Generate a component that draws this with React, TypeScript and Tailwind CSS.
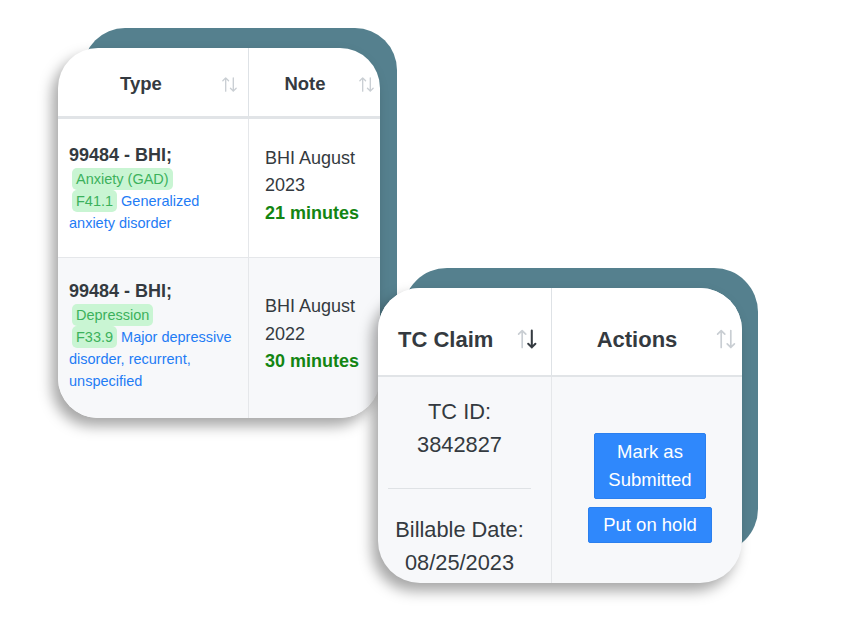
import React from 'react';

const font = { fontFamily: '"Liberation Sans", Arial, sans-serif' };

const SortIcon: React.FC<{ active?: boolean; size?: number }> = ({ active, size = 20 }) => (
  <svg width={size} height={size} viewBox="0 0 20 20" fill="none" strokeLinecap="round" strokeLinejoin="round">
    <g stroke="#c9ced3" strokeWidth="1.4">
      <path d="M6 17V3M3 6l3-3 3 3" />
    </g>
    <g stroke={active ? '#343a40' : '#c9ced3'} strokeWidth={active ? 1.7 : 1.4}>
      <path d="M14 3v14M11 14l3 3 3-3" />
    </g>
  </svg>
);

const Badge: React.FC<{ children: React.ReactNode }> = ({ children }) => (
  <span className="inline-block rounded-[5px] bg-[#c9f5d3] px-[4px] leading-[22px] text-[#3cb15c]">{children}</span>
);

interface Row {
  problem: string;
  code: string;
  desc: string;
  year: string;
  minutes: string;
  striped?: boolean;
}

const rows: Row[] = [
  { problem: 'Anxiety (GAD)', code: 'F41.1', desc: 'Generalized anxiety disorder', year: '2023', minutes: '21 minutes' },
  { problem: 'Depression', code: 'F33.9', desc: 'Major depressive disorder, recurrent, unspecified', year: '2022', minutes: '30 minutes', striped: true },
];

export default function App() {
  return (
    <div className="relative h-[624px] w-[847px] overflow-hidden bg-white" style={font}>
      {/* card one */}
      <div className="absolute left-[83px] top-[28px] h-[362px] w-[314px] rounded-[42px] bg-[#55808e]" />
      <div className="absolute left-[58px] top-[48px] h-[370px] w-[322px] overflow-hidden rounded-[40px] bg-white shadow-[-6px_8px_14px_rgba(0,0,0,0.35)]">
        <div className="grid grid-cols-[191px_131px]">
          <div className="flex h-[68px] items-center border-r border-[#dee2e6] pt-[4px]">
            <span className="flex-1 pl-[4px] text-center text-[18.5px] font-bold text-[#343a40]">Type</span>
            <span className="pr-[9px]"><SortIcon size={19} /></span>
          </div>
          <div className="flex h-[68px] items-center pt-[4px]">
            <span className="flex-1 pl-[4px] text-center text-[18.5px] font-bold text-[#343a40]">Note</span>
            <span className="pr-[4px]"><SortIcon size={19} /></span>
          </div>
        </div>
        <div className="h-[3px] bg-[#e1e4e7]" />
        {rows.map((r, i) => (
          <div
            key={r.code}
            className={`grid grid-cols-[191px_131px] ${r.striped ? 'bg-[#f7f8fa]' : 'bg-white'} ${i === 0 ? 'h-[139px] border-b border-[#e5e7ea]' : 'h-[161px]'}`}
          >
            <div className={`flex flex-col justify-center border-r border-[#e5e7ea] pl-[11px] pr-[6px] text-[14.5px] leading-[22px] ${i === 1 ? 'pb-[6px]' : ''}`}>
              <div className="mb-[1px] text-[18px] font-bold leading-[24px] text-[#343a40]">99484 - BHI;</div>
              <div>
                <span className="ml-[3px]"><Badge>{r.problem}</Badge></span>
              </div>
              <div className="text-[#1f7cf5]">
                <span className="ml-[3px] mr-[4px]"><Badge>{r.code}</Badge></span>
                {r.desc}
              </div>
            </div>
            <div className={`flex flex-col justify-center pl-[16px] text-[18px] leading-[27.5px] text-[#343a40] ${i === 0 ? 'pb-[4px]' : 'pb-[8px]'}`}>
              <div>BHI August</div>
              <div>{r.year}</div>
              <div className="font-bold text-[#138512]">{r.minutes}</div>
            </div>
          </div>
        ))}
      </div>

      {/* card two */}
      <div className="absolute left-[403px] top-[268px] h-[285px] w-[355px] rounded-[44px] bg-[#55808e]" />
      <div className="absolute left-[378px] top-[288px] flex h-[295px] w-[364px] flex-col overflow-hidden rounded-[42px] bg-[#f7f8fa] shadow-[-6px_8px_14px_rgba(0,0,0,0.35)]">
        <div className="grid grid-cols-[174px_190px] bg-white">
          <div className="flex h-[87px] items-center border-r border-[#dee2e6] pl-[20px] pr-[12px] pt-[15px]">
            <span className="flex-1 text-[22px] font-bold text-[#343a40]">TC Claim</span>
            <SortIcon active size={24} />
          </div>
          <div className="flex h-[87px] items-center pr-[4px] pt-[15px]">
            <span className="flex-1 pl-[8px] text-center text-[22px] font-bold text-[#343a40]">Actions</span>
            <SortIcon size={24} />
          </div>
        </div>
        <div className="h-[2px] bg-[#e1e4e7]" />
        <div className="grid flex-1 grid-cols-[174px_190px]">
          <div className="flex flex-col items-center border-r border-[#e5e7ea] pl-[10px] pr-[20px] pt-[18px] text-center text-[21.8px] leading-[33px] text-[#343a40]">
            <div>TC ID:</div>
            <div>3842827</div>
            <div className="mb-[24px] mt-[27px] h-px w-full bg-[#dfe2e5]" />
            <div>Billable Date:</div>
            <div>08/25/2023</div>
          </div>
          <div className="flex flex-col items-center gap-[8px] pl-[6px] pt-[56px]">
            <button className="rounded-[2px] border border-[#2b7fee] bg-[#2f88fc] px-[13px] py-[4px] text-[18.5px] leading-[28px] text-white">
              Mark as
              <br />
              Submitted
            </button>
            <button className="rounded-[2px] border border-[#2b7fee] bg-[#2f88fc] px-[14px] py-[3px] text-[18.5px] leading-[28px] text-white">
              Put on hold
            </button>
          </div>
        </div>
      </div>
    </div>
  );
}
